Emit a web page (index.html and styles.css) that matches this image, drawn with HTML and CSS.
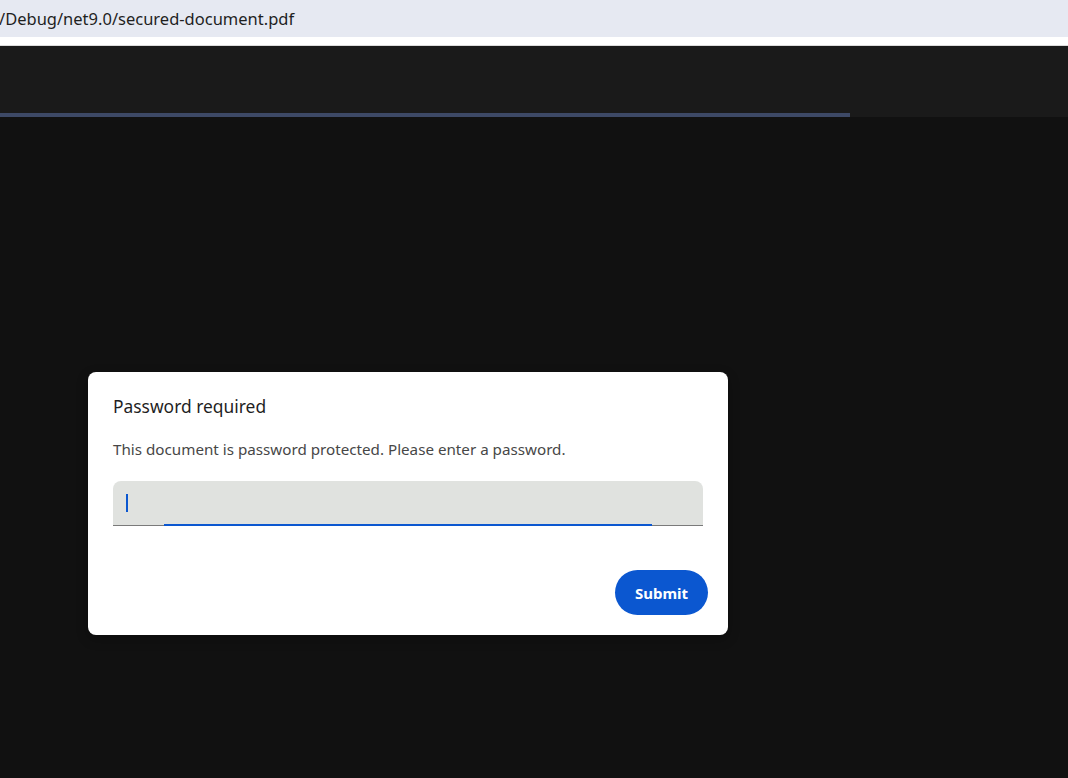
FILE: index.html
```html
<!DOCTYPE html>
<html lang="en">
<head>
<meta charset="utf-8">
<title>secured-document.pdf</title>
<link rel="stylesheet" href="styles.css">
</head>
<body>
<div class="urlbar"><span class="url">/Debug/net9.0/secured-document.pdf</span></div>
<div class="strip"></div>
<div class="toolbar"><div class="progress"></div></div>
<main class="viewer">
  <div class="dialog" role="dialog">
    <h1 class="title">Password required</h1>
    <p class="desc">This document is password protected. Please enter a password.</p>
    <div class="field">
      <span class="caret"></span>
      <span class="focus-line"></span>
    </div>
    <div class="actions">
      <button class="submit">Submit</button>
    </div>
  </div>
</main>
</body>
</html>
```
FILE: styles.css
```css
html, body {
  margin: 0;
  padding: 0;
  background: #111111;
  height: 100%;
  overflow: hidden;
}
body {
  font-family: "Noto Sans", "Open Sans", sans-serif;
}
.urlbar {
  height: 37px;
  background: #e6e9f2;
  display: flex;
  align-items: center;
}
.url {
  font-family: "Noto Sans", sans-serif;
  font-size: 16.5px;
  color: #1f1f1f;
  margin-left: -1px;
  margin-top: -1px;
}
.strip {
  height: 8px;
  background: #ffffff;
  border-bottom: 1px solid #dcdcdc;
}
.toolbar {
  height: 71px;
  background: #1a1a1a;
  display: flex;
  align-items: flex-end;
}
.progress {
  width: 850px;
  height: 4px;
  background: #3d4966;
}
.viewer {
  padding: 255px 0 0 88px;
}
.dialog {
  width: 640px;
  box-sizing: border-box;
  background: #ffffff;
  border-radius: 8px;
  padding: 22px 25px 20px 25px;
  box-shadow: 0 4px 12px rgba(0,0,0,0.3);
}
.title {
  margin: 0;
  font-size: 17.4px;
  font-weight: 400;
  line-height: 24px;
  color: #1f1f1f;
}
.desc {
  margin: 21px 0 0 0;
  font-size: 15.2px;
  line-height: 20px;
  color: #474747;
}
.field {
  position: relative;
  margin-top: 22px;
  height: 44px;
  background: #e0e2df;
  border-radius: 8px 8px 0 0;
  border-bottom: 1px solid #7a7a7a;
}
.caret {
  position: absolute;
  left: 13px;
  top: 13px;
  width: 2px;
  height: 18px;
  background: #0b57d0;
}
.focus-line {
  position: absolute;
  left: 51px;
  width: 488px;
  bottom: -1px;
  height: 2px;
  background: #0b57d0;
}
.actions {
  display: flex;
  justify-content: flex-end;
  margin-top: 44px;
  margin-right: -5px;
}
.submit {
  width: 93px;
  height: 45px;
  border: none;
  border-radius: 23px;
  background: #0b57d0;
  color: #ffffff;
  font-family: "Noto Sans", sans-serif;
  font-size: 15px;
  font-weight: 700;
  padding: 0;
}
```
